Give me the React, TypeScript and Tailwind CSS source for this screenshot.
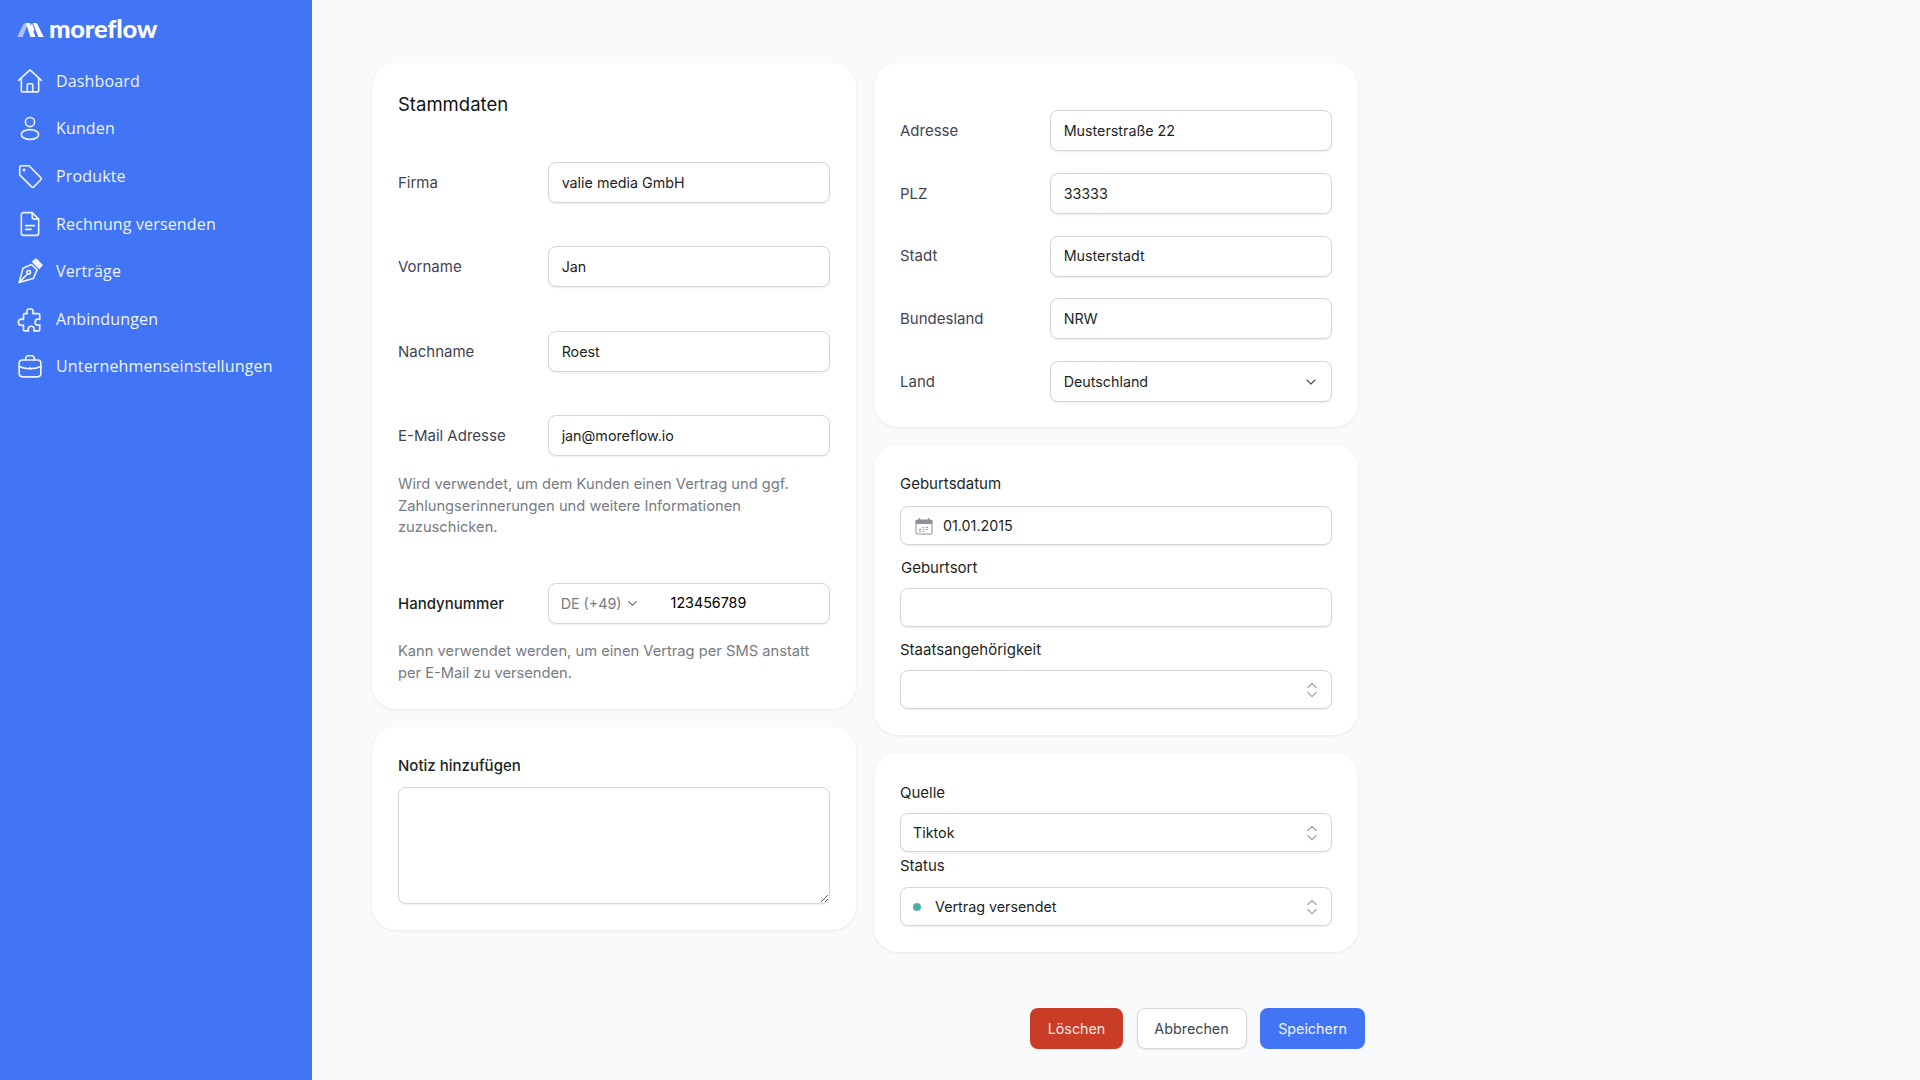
import { ChevronDown, ChevronsUpDown } from 'lucide-react';
import type { ReactNode } from 'react';

const Ic = ({ children }: { children: ReactNode }) => (
  <svg viewBox="0 0 24 24" fill="none" stroke="currentColor" strokeWidth="1.5" strokeLinecap="round" strokeLinejoin="round" className="w-[26px] h-[26px] shrink-0">
    {children}
  </svg>
);

const navItems: { label: string; icon: ReactNode }[] = [
  {
    label: 'Dashboard',
    icon: (
      <Ic>
        <path d="M1.500 11.500 12 1.800l10.500 9.700" />
        <path d="M4 9.500V21a1 1 0 0 0 1 1h14a1 1 0 0 0 1-1V9.500" />
        <path d="M9.500 22v-6.500a1 1 0 0 1 1-1h3a1 1 0 0 1 1 1V22" />
      </Ic>
    ),
  },
  {
    label: 'Kunden',
    icon: (
      <Ic>
        <circle cx="12" cy="6.500" r="4.200" />
        <ellipse cx="12" cy="18" rx="8" ry="4.500" />
      </Ic>
    ),
  },
  {
    label: 'Produkte',
    icon: (
      <Ic>
        <path d="M2.500 4a1.500 1.500 0 0 1 1.500-1.500h7L22 13.500a1.500 1.500 0 0 1 0 2L15.500 22a1.500 1.500 0 0 1-2 0L2.500 11Z" />
        <circle cx="6.500" cy="6.500" r="0.600" />
      </Ic>
    ),
  },
  {
    label: 'Rechnung versenden',
    icon: (
      <Ic>
        <path d="M14 1.500H6a2 2 0 0 0-2 2v17a2 2 0 0 0 2 2h12a2 2 0 0 0 2-2V7.500Z" />
        <path d="M14 1.500v4a2 2 0 0 0 2 2h4" />
        <path d="M8 13.500h8M8 17h5" />
      </Ic>
    ),
  },
  {
    label: 'Verträge',
    icon: (
      <Ic>
        <path d="M2 22.500 5.500 9.500l8-3.500 5 5-3.500 8Z" />
        <path d="M2 22.500l7.500-7.500" />
        <circle cx="10.800" cy="13.200" r="1.700" />
        <path d="m14.500 3.500 3-2.500 5.500 5.500-2.500 3Z" fill="currentColor" />
      </Ic>
    ),
  },
  {
    label: 'Anbindungen',
    icon: (
      <Ic>
        <path d="M9 5.500a3 3 0 1 1 6 0c0 .8-.4 1-.4 1.500h5.400a1 1 0 0 1 1 1v4.500c-.5 0-.8-.4-1.500-.4a2.800 2.800 0 0 0 0 5.600c.7 0 1-.4 1.500-.4V22a1 1 0 0 1-1 1h-4.500c0-.5.400-.8.400-1.500a2.800 2.800 0 0 0-5.600 0c0 .7.400 1 .400 1.500H7a1 1 0 0 1-1-1v-4.500c-.5 0-1 .4-1.800.4a2.900 2.900 0 0 1 0-5.800c.8 0 1.300.4 1.800.4V8a1 1 0 0 1 1-1h2.400c0-.5-.4-.7-.4-1.500Z" />
      </Ic>
    ),
  },
  {
    label: 'Unternehmenseinstellungen',
    icon: (
      <Ic>
        <rect x="2" y="6.500" width="20" height="15.500" rx="3" />
        <path d="M8 6.500V5a2.500 2.500 0 0 1 2.500-2.500h3A2.500 2.500 0 0 1 16 5v1.500" />
        <path d="M2 12.500c3 1.500 6 2 10 2s7-.5 10-2" />
        <path d="M12 13.500v1" />
      </Ic>
    ),
  },
];

const inputBox = 'border border-[#d4d6da] rounded-lg bg-white shadow-[0_1px_2px_rgba(0,0,0,0.08)]';

function Card({ className, children }: { className: string; children: ReactNode }) {
  return <div className={`bg-white rounded-[24px] shadow-[0_1px_3px_rgba(0,0,0,0.08)] px-[26px] ${className}`}>{children}</div>;
}

function LeftRow({ label, value }: { label: string; value: string }) {
  return (
    <div className="flex items-center">
      <label className="w-[150px] pt-[1px] text-[15px] text-[#3f4550]">{label}</label>
      <div className={`${inputBox} w-[283px] h-[41px] flex items-center px-[13px] text-[#1c1f24]`}>{value}</div>
    </div>
  );
}

function RightRow({ label, children }: { label: string; children: ReactNode }) {
  return (
    <div className="flex items-center">
      <label className="w-[150px] pt-[1px] text-[15px] text-[#3f4550]">{label}</label>
      <div className={`${inputBox} w-[283px] h-[41px] flex items-center justify-between px-[13px] text-[#1c1f24]`}>{children}</div>
    </div>
  );
}

function Stacked({ label, children, gap }: { label: string; children?: ReactNode; gap: string }) {
  return (
    <div>
      <div className={`h-[20px] leading-[22px] text-[15px] text-[#1c1f24] ${gap}`}>{label}</div>
      <div className={`${inputBox} h-[39px] flex items-center justify-between px-[12px] text-[#1c1f24]`}>{children}</div>
    </div>
  );
}

const Updown = () => <ChevronsUpDown className="w-[20px] h-[22px] text-[#9a9ea6] -mr-[3px]" strokeWidth={1.3} />;

export default function App() {
  return (
    <div className="flex min-h-screen bg-[#f9fafb] text-[14.3px] [font-family:Inter,sans-serif]">
      <aside className="w-[312px] shrink-0 bg-[#4274f6] text-[#eef3ff] [font-family:'Open_Sans',sans-serif]">
        <div className="h-[57px] pt-[12px] pl-[17px] flex items-start gap-[5px]">
          <svg viewBox="0 0 24.500 13" className="w-[27px] h-[14px] mt-[11px] shrink-0">
            <path d="M0 13 5.500 1.500Q6.300 0 8 0h2L5 13Z" fill="#a9c2fb" />
            <path d="M8 0h3.500L17 13h-4.800Z" fill="#fff" />
            <path d="M14.500 0H17q1.200 0 1.800 1.300L24.500 13h-5Z" fill="#fff" />
            <path d="M12 4.500 13.500 0l2.300 6-1.500 3.500Z" fill="#fff" />
          </svg>
          <span className="text-[25.5px] leading-[32px] font-black text-white tracking-[-0.2px] [font-family:Lato,sans-serif]">moreflow</span>
        </div>
        <nav className="flex flex-col">
          {navItems.map((item) => (
            <div key={item.label} className="h-[47.6px] flex items-center pl-[17px] gap-[13px] text-[16px] font-medium tracking-[0.15px]">
              {item.icon}
              <span>{item.label}</span>
            </div>
          ))}
        </nav>
      </aside>

      <main className="pl-[60px] pt-[63px] w-[1053px]">
        <div className="flex gap-[18px]">
          <div className="w-[484px] flex flex-col gap-[18px]">
            <Card className="h-[646px]">
              <h1 className="text-[18.5px] leading-[28px] pt-[27px] text-[#111318]">Stammdaten</h1>
              <div className="flex flex-col gap-[43.4px] mt-[44px]">
                <LeftRow label="Firma" value="valie media GmbH" />
                <LeftRow label="Vorname" value="Jan" />
                <LeftRow label="Nachname" value="Roest" />
                <LeftRow label="E-Mail Adresse" value="jan@moreflow.io" />
              </div>
              <p className="mt-[18px] leading-[21.6px] text-[14.7px] text-[#777b83]">
                Wird verwendet, um dem Kunden einen Vertrag und ggf. Zahlungserinnerungen und weitere Informationen zuzuschicken.
              </p>
              <div className="flex items-center mt-[44px]">
                <label className="w-[150px] pt-[1px] text-[15px] text-[#1c1f24] font-medium">Handynummer</label>
                <div className={`${inputBox} w-[283px] h-[41px] flex items-center px-[12px]`}>
                  <span className="text-[#777b83] text-[14.3px] mt-[1px]">DE (+49)</span>
                  <ChevronDown className="w-[15px] h-[15px] ml-[3px] text-[#5f636b]" strokeWidth={1.8} />
                  <span className="ml-[31px] text-black -mt-[1px]">123456789</span>
                </div>
              </div>
              <p className="mt-[17px] leading-[21.6px] text-[14.7px] text-[#777b83]">
                Kann verwendet werden, um einen Vertrag per SMS anstatt per E-Mail zu versenden.
              </p>
            </Card>
            <Card className="h-[203px] pt-[29px]">
              <div className="h-[20px] leading-[20px] text-[15px] font-medium text-[#1c1f24]">Notiz hinzufügen</div>
              <textarea className={`${inputBox} block w-full h-[117px] mt-[11px] outline-none`} defaultValue="" />
            </Card>
          </div>

          <div className="w-[484px] flex flex-col gap-[18px]">
            <Card className="h-[364px] pt-[47px]">
              <div className="flex flex-col gap-[21.8px]">
                <RightRow label="Adresse">Musterstraße 22</RightRow>
                <RightRow label="PLZ">33333</RightRow>
                <RightRow label="Stadt">Musterstadt</RightRow>
                <RightRow label="Bundesland">NRW</RightRow>
                <RightRow label="Land">
                  <span>Deutschland</span>
                  <ChevronDown className="w-[16px] h-[16px] text-[#4b5058] -mr-[1px]" strokeWidth={1.7} />
                </RightRow>
              </div>
            </Card>
            <Card className="h-[290px] pt-[28px]">
              <div className="flex flex-col gap-[12px]">
                <Stacked label="Geburtsdatum" gap="mb-[13px]">
                  <div className="flex items-center gap-[10px] ml-[2px]">
                    <svg viewBox="0 0 18 18" className="w-[18px] h-[18px] text-[#8c9099]" fill="none" stroke="currentColor">
                      <rect x="1" y="3" width="16" height="14" rx="1" />
                      <path d="M1 3.500h16V6.500H1Z" fill="currentColor" />
                      <path d="M4.500 1v3M13.500 1v3" strokeWidth="1.300" />
                      <path d="M4 12.500h2M7.500 10.500h2M7.500 12.500h2M11 10.500h2M11 12.500h2M4 14.500h2M7.500 14.500h2" strokeWidth="0.900" />
                    </svg>
                    <span>01.01.2015</span>
                  </div>
                </Stacked>
                <Stacked label="Geburtsort" gap="mb-[11px] ml-[1px]" />
                <Stacked label="Staatsangehörigkeit" gap="mb-[11px]">
                  <span />
                  <Updown />
                </Stacked>
              </div>
            </Card>
            <Card className="h-[199px] pt-[29px]">
              <div className="flex flex-col gap-[3px]">
                <Stacked label="Quelle" gap="mb-[11px]">
                  <span>Tiktok</span>
                  <Updown />
                </Stacked>
                <Stacked label="Status" gap="mb-[12px]">
                  <span className="flex items-center">
                    <span className="w-[8px] h-[8px] rounded-full bg-[#4fb0a5] mr-[14px]" />
                    Vertrag versendet
                  </span>
                  <Updown />
                </Stacked>
              </div>
            </Card>
          </div>
        </div>
        <div className="flex justify-end gap-[13.5px] mt-[56px] w-[993px]">
          <button className="w-[93px] h-[41px] rounded-lg bg-[#c93c25] text-[#fbe9e6]">Löschen</button>
          <button className={`${inputBox} w-[110px] h-[41px] text-[#3f4550]`}>Abbrechen</button>
          <button className="w-[105px] h-[41px] rounded-lg bg-[#4274f6] text-[#eef3ff]">Speichern</button>
        </div>
      </main>
    </div>
  );
}
